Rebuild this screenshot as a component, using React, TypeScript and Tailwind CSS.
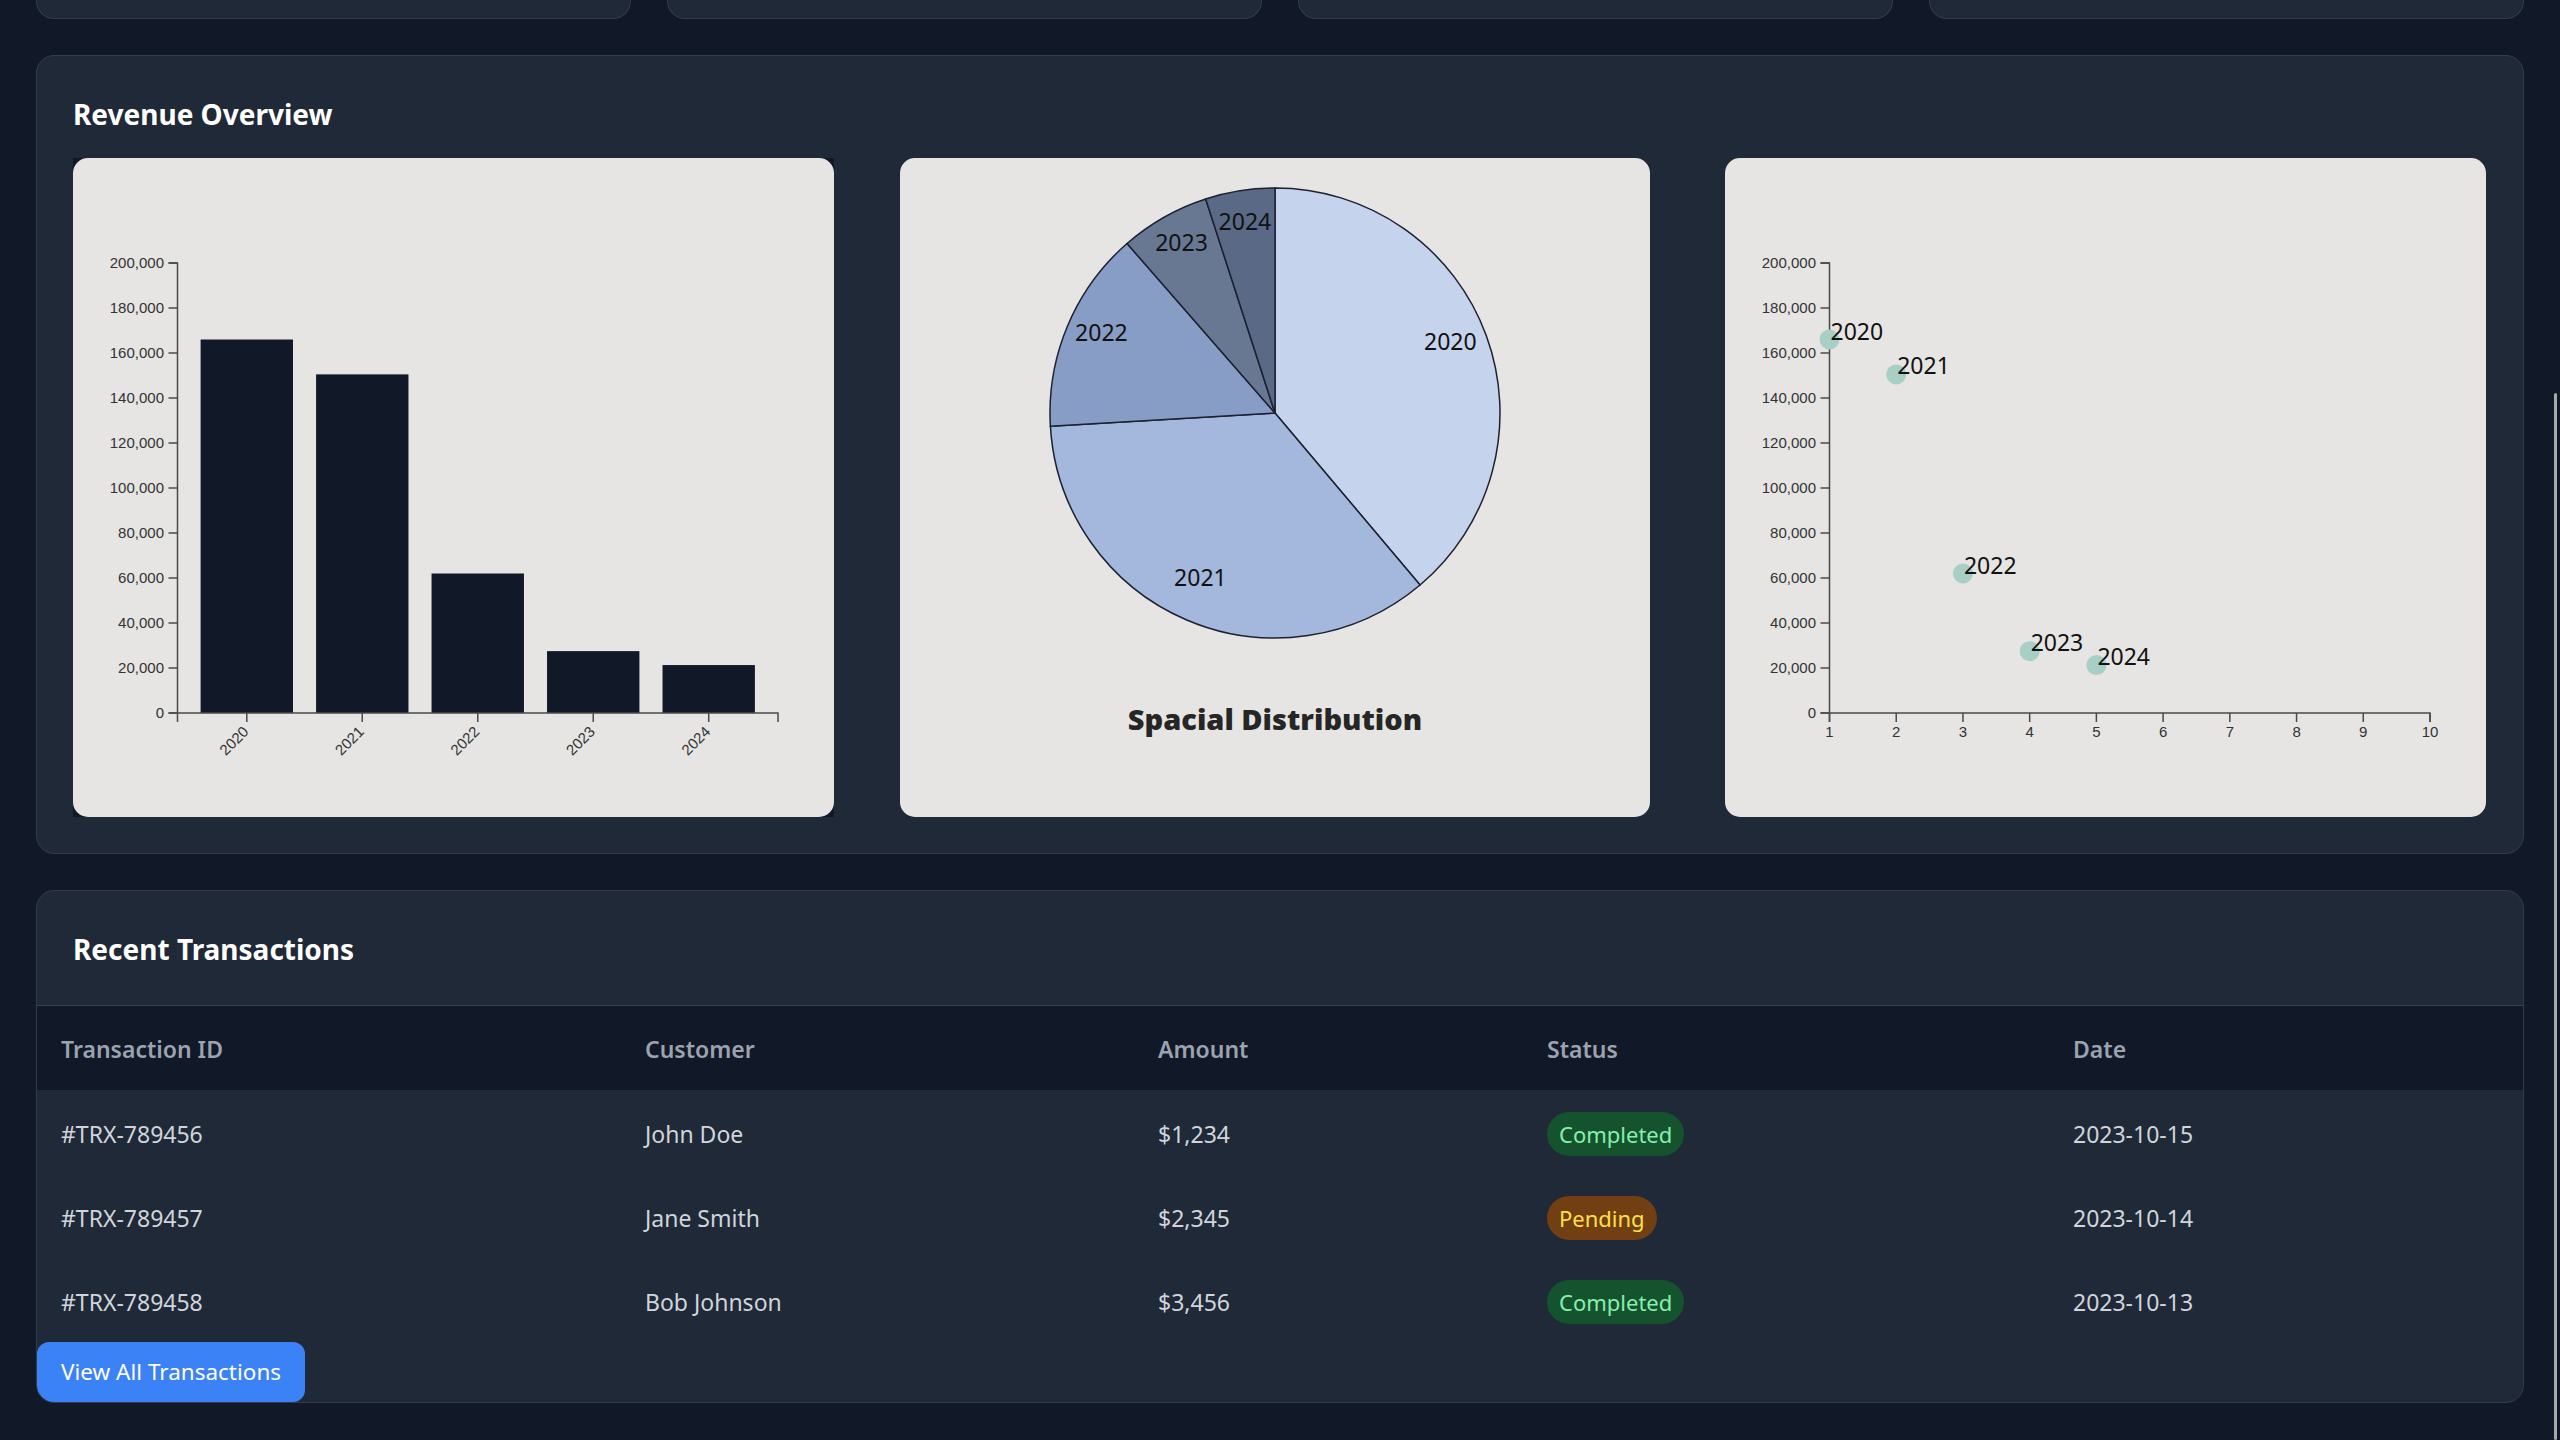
import React from "react";

const AXIS = "#4a4a4a";
const TICK_TEXT = "#333333";
const ARIAL = "'Liberation Sans', Arial, sans-serif";
const UI = "'Noto Sans', 'Open Sans', sans-serif";

const data = [
  { year: "2020", value: 166000 },
  { year: "2021", value: 150500 },
  { year: "2022", value: 62000 },
  { year: "2023", value: 27500 },
  { year: "2024", value: 21300 },
];

const L = 104.5;
const T = 105;
const B = 555;
const R = 705;
const yScale = (v: number) => B - (v / 200000) * (B - T);
const yTicks = [0, 20000, 40000, 60000, 80000, 100000, 120000, 140000, 160000, 180000, 200000];
const fmt = (n: number) => String(n).replace(/\B(?=(\d{3})+(?!\d))/g, ",");

function YAxis() {
  return (
    <g>
      {yTicks.map((t) => (
        <g key={t} transform={`translate(${L},${yScale(t)})`}>
          <line x1={-9} x2={0} y1={0} y2={0} stroke={AXIS} strokeWidth={1.5} />
          <text x={-13.5} dy="0.32em" textAnchor="end" fontSize={15} fill={TICK_TEXT} fontFamily={ARIAL}>
            {fmt(t)}
          </text>
        </g>
      ))}
      <path d={`M${L - 9},${T}H${L}V${B}H${L - 9}`} fill="none" stroke={AXIS} strokeWidth={1.5} />
    </g>
  );
}

function BarChart() {
  const step = (R - L) / 5.2;
  const bw = step * 0.8;
  const x0 = L + step * 0.2;
  return (
    <svg width={761} height={659} className="block">
      {data.map((d, i) => {
        const x = x0 + i * step;
        const y = yScale(d.value);
        return <rect key={d.year} x={x} y={y} width={bw} height={B - y} fill="#111827" />;
      })}
      <YAxis />
      <g>
        {data.map((d, i) => {
          const cx = x0 + i * step + bw / 2;
          return (
            <g key={d.year} transform={`translate(${cx},${B})`}>
              <line x1={0} x2={0} y1={0} y2={9} stroke={AXIS} strokeWidth={1.5} />
              <text
                x={-12}
                y={15.75}
                transform="rotate(-45)"
                textAnchor="end"
                fontSize={15}
                fill={TICK_TEXT}
                fontFamily={ARIAL}
              >
                {d.year}
              </text>
            </g>
          );
        })}
        <path d={`M${L},${B + 9}V${B}H${R}V${B + 9}`} fill="none" stroke={AXIS} strokeWidth={1.5} />
      </g>
    </svg>
  );
}

const pieColors = ["#c6d3ec", "#a4b7dc", "#889dc6", "#687893", "#5a6985"];
const pieLabels: [number, number][] = [
  [175.3, -72],
  [-74.6, 164.4],
  [-173.6, -80.6],
  [-93.5, -170.8],
  [-30.1, -192.5],
];

function PieChart() {
  const cx = 375;
  const cy = 255;
  const r = 225;
  const total = data.reduce((s, d) => s + d.value, 0);
  let a0 = 0;
  const arcs = data.map((d, i) => {
    const a1 = a0 + (d.value / total) * Math.PI * 2;
    const x0 = cx + r * Math.sin(a0);
    const y0 = cy - r * Math.cos(a0);
    const x1 = cx + r * Math.sin(a1);
    const y1 = cy - r * Math.cos(a1);
    const large = a1 - a0 > Math.PI ? 1 : 0;
    const path = `M${cx},${cy}L${x0},${y0}A${r},${r} 0 ${large} 1 ${x1},${y1}Z`;
    a0 = a1;
    return { path, color: pieColors[i], year: d.year };
  });
  return (
    <svg width={750} height={659} className="block">
      {arcs.map((a) => (
        <path key={a.year} d={a.path} fill={a.color} stroke="#1b2130" strokeWidth={1.5} />
      ))}
      {arcs.map((a, i) => (
        <text
          key={a.year + "l"}
          x={cx + pieLabels[i][0]}
          y={cy + pieLabels[i][1]}
          textAnchor="middle"
          dominantBaseline="central"
          fontSize={23}
          fill="#111111"
          fontFamily={UI}
        >
          {a.year}
        </text>
      ))}
      <text
        x={375}
        y={572}
        textAnchor="middle"
        fontSize={29}
        fontWeight={900}
        fill="#262626"
        fontFamily={UI}
      >
        Spacial Distribution
      </text>
    </svg>
  );
}

function ScatterChart() {
  const xs = (v: number) => L + ((v - 1) / 9) * (R - L);
  const xTicks = [1, 2, 3, 4, 5, 6, 7, 8, 9, 10];
  return (
    <svg width={761} height={659} className="block">
      <YAxis />
      <g>
        {xTicks.map((t) => (
          <g key={t} transform={`translate(${xs(t)},${B})`}>
            <line x1={0} x2={0} y1={0} y2={9} stroke={AXIS} strokeWidth={1.5} />
            <text y={13.5} dy="0.71em" textAnchor="middle" fontSize={15} fill={TICK_TEXT} fontFamily={ARIAL}>
              {t}
            </text>
          </g>
        ))}
        <path d={`M${L},${B + 9}V${B}H${R}V${B + 9}`} fill="none" stroke={AXIS} strokeWidth={1.5} />
      </g>
      {data.map((d, i) => (
        <circle key={d.year} cx={xs(i + 1)} cy={yScale(d.value)} r={10} fill="#a7cfc5" />
      ))}
      {data.map((d, i) => (
        <text key={d.year + "t"} x={xs(i + 1) + 1} y={yScale(d.value)} fontSize={23} fill="#111111" fontFamily={UI}>
          {d.year}
        </text>
      ))}
    </svg>
  );
}

const rows = [
  { id: "#TRX-789456", customer: "John Doe", amount: "$1,234", status: "Completed", date: "2023-10-15" },
  { id: "#TRX-789457", customer: "Jane Smith", amount: "$2,345", status: "Pending", date: "2023-10-14" },
  { id: "#TRX-789458", customer: "Bob Johnson", amount: "$3,456", status: "Completed", date: "2023-10-13" },
];

function Badge({ status }: { status: string }) {
  if (status === "Completed") {
    return (
      <span className="inline-block rounded-full bg-[#14532d] px-[12px] py-[4px] text-[22px] leading-[36px] text-[#86efac] align-middle">
        Completed
      </span>
    );
  }
  return (
    <span className="inline-block rounded-full bg-[#713f12] px-[12px] py-[4px] text-[22px] leading-[36px] text-[#fde047] align-middle">
      Pending
    </span>
  );
}

export default function App() {
  return (
    <div className="min-h-screen bg-[#111827] px-[36px] pb-[36px] font-['Noto_Sans','Open_Sans',sans-serif]">
      <div className="grid grid-cols-4 gap-[36px]">
        <div className="h-[19px] rounded-b-[18px] border border-t-0 border-[#323c4c] bg-[#1f2937]" />
        <div className="h-[19px] rounded-b-[18px] border border-t-0 border-[#323c4c] bg-[#1f2937]" />
        <div className="h-[19px] rounded-b-[18px] border border-t-0 border-[#323c4c] bg-[#1f2937]" />
        <div className="h-[19px] rounded-b-[18px] border border-t-0 border-[#323c4c] bg-[#1f2937]" />
      </div>

      <section className="mt-[36px] rounded-[18px] border border-[#323c4c] bg-[#1f2937] p-[36px]">
        <h2 className="pt-[2px] text-[28px] font-bold leading-[40px] text-white">Revenue Overview</h2>
        <div className="mt-[24px] flex">
          <div className="h-[659px] w-[761px] shrink-0 bg-[#111827]">
            <div className="h-full w-full overflow-hidden rounded-[15px] bg-[#e6e5e3]">
              <BarChart />
            </div>
          </div>
          <div className="ml-[66px] h-[659px] w-[750px] shrink-0 overflow-hidden rounded-[15px] bg-[#e6e5e3]">
            <PieChart />
          </div>
          <div className="ml-[75px] h-[659px] w-[761px] shrink-0 overflow-hidden rounded-[15px] bg-[#e6e5e3]">
            <ScatterChart />
          </div>
        </div>
      </section>

      <section className="mt-[36px] overflow-hidden rounded-[18px] border border-[#323c4c] bg-[#1f2937]">
        <div className="border-b border-[#374151] p-[36px]">
          <h2 className="pt-[2px] text-[28px] font-bold leading-[40px] text-white">Recent Transactions</h2>
        </div>
        <table className="w-full table-fixed border-collapse text-left">
          <colgroup>
            <col className="w-[584px]" />
            <col className="w-[513px]" />
            <col className="w-[389px]" />
            <col className="w-[526px]" />
            <col />
          </colgroup>
          <thead className="bg-[#111827]">
            <tr>
              <th className="px-[24px] pt-[25px] pb-[23px] text-[23px] font-semibold leading-[36px] text-[#9ca3af]">Transaction ID</th>
              <th className="px-[24px] pt-[25px] pb-[23px] text-[23px] font-semibold leading-[36px] text-[#9ca3af]">Customer</th>
              <th className="px-[24px] pt-[25px] pb-[23px] text-[23px] font-semibold leading-[36px] text-[#9ca3af]">Amount</th>
              <th className="px-[24px] pt-[25px] pb-[23px] text-[23px] font-semibold leading-[36px] text-[#9ca3af]">Status</th>
              <th className="px-[24px] pt-[25px] pb-[23px] text-[23px] font-semibold leading-[36px] text-[#9ca3af]">Date</th>
            </tr>
          </thead>
          <tbody>
            {rows.map((r) => (
              <tr key={r.id} className="h-[84px]">
                <td className="px-[24px] pt-[22px] pb-[18px] text-[23px] leading-[36px] text-[#d1d5db]">{r.id}</td>
                <td className="px-[24px] pt-[22px] pb-[18px] text-[23px] leading-[36px] text-[#d1d5db]">{r.customer}</td>
                <td className="px-[24px] pt-[22px] pb-[18px] text-[23px] leading-[36px] text-[#d1d5db]">{r.amount}</td>
                <td className="px-[24px] pt-[22px] pb-[18px] text-[23px] leading-[36px]">
                  <Badge status={r.status} />
                </td>
                <td className="px-[24px] pt-[22px] pb-[18px] text-[23px] leading-[36px] text-[#d1d5db]">{r.date}</td>
              </tr>
            ))}
          </tbody>
        </table>
        <button className="block rounded-[12px] bg-[#3b82f6] px-[24px] py-[12px] text-[22.5px] leading-[36px] text-white">
          View All Transactions
        </button>
      </section>

      <div className="pointer-events-none fixed right-[3px] top-[393px] bottom-0 w-[3px] rounded-full bg-[#a8a8a8]" />
    </div>
  );
}
